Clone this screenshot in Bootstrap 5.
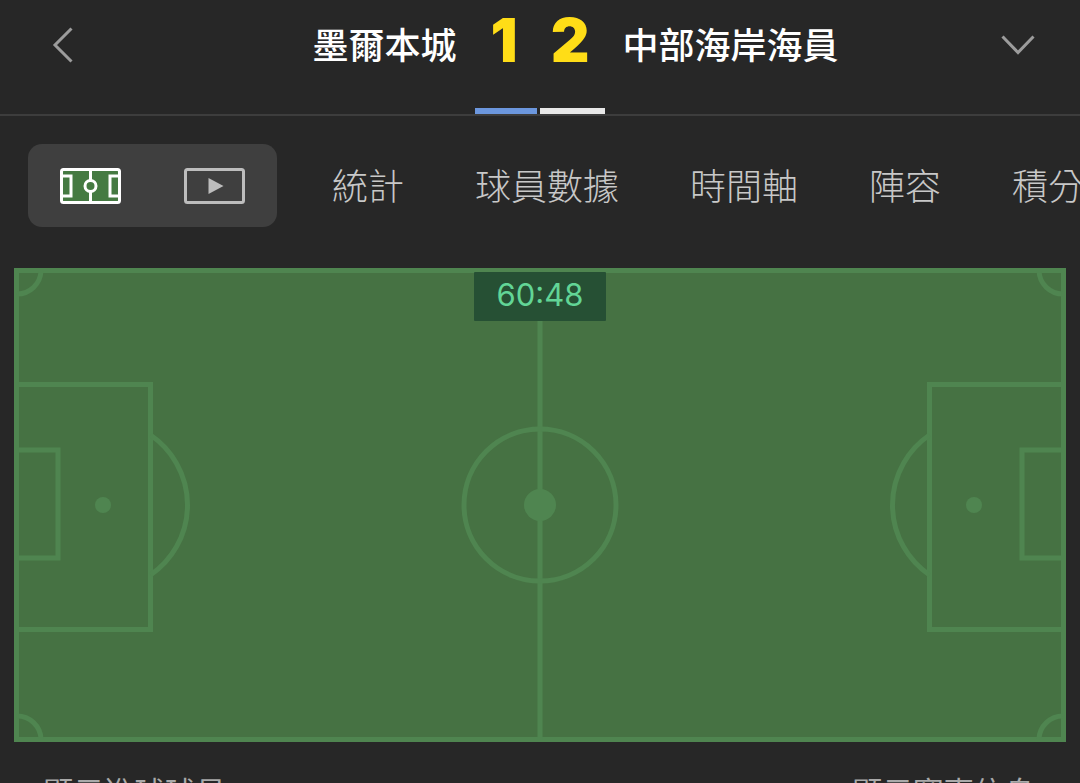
<!DOCTYPE html>
<html lang="zh-Hant">
<head>
<meta charset="utf-8">
<title>墨爾本城 1 2 中部海岸海員</title>
<link href="https://cdn.jsdelivr.net/npm/bootstrap@5.3.0/dist/css/bootstrap.min.css" rel="stylesheet">
<style>
html,body{height:783px;overflow:hidden}
body{background:#272727;font-family:"Noto Sans CJK TC","Liberation Sans",sans-serif;color:#c8c8c8}
.match-head{height:108px;display:grid;grid-template-columns:1fr auto 1fr;align-items:flex-start}
.side-l,.side-r{display:flex;align-items:center;height:90px;justify-content:space-between}
.side-l{padding-left:52px;padding-right:34px}
.side-r{padding-left:33px;padding-right:45px}
.team-name{font-size:36px;font-weight:500;color:#fff;line-height:1;white-space:nowrap;margin-top:-5px}
.scores{display:flex;gap:33px;height:80px;align-items:center;font-family:Inter,"Liberation Sans",sans-serif;font-weight:900;font-size:60px;line-height:1;color:#ffdd17}
.score-bars{height:6px;gap:3px}
.bar-home{width:62px;background:#6c97de}
.bar-away{width:65px;background:#e8e8e8}
.head-rule{height:2px;background:#3d3d3d}
.tab-row{padding:28px 0 0 28px;gap:55px;white-space:nowrap;height:152px}
.view-pill{width:249px;height:83px;background:#3f3f3f;border-radius:14px;padding-left:32px;gap:63px;flex:none}
.tab-list{gap:71px;font-size:36px;font-weight:300;line-height:80px;height:83px}
.pitch-wrap{margin:0 14px;height:474px}
.pitch-wrap svg{display:block}
.clock{top:4px;left:460px;width:132px;height:49px;background:#265034;color:#62d596;font-family:Inter,"Liberation Sans",sans-serif;font-size:31px;line-height:45px;text-align:center;border-radius:1px}
.foot-row{padding:29px 45px 0 43px;font-size:30.5px;line-height:40px;color:#aaa}
</style>
</head>
<body>
<div class="match-head">
  <div class="side-l">
    <svg width="22" height="36" viewBox="0 0 22 36" fill="none" stroke="#9c9c9c" stroke-width="3"><path d="M19.5 1.5 3 18l16.5 16.5"/></svg>
    <span class="team-name">墨爾本城</span>
  </div>
  <div class="scores"><span>1</span><span>2</span></div>
  <div class="side-r">
    <span class="team-name">中部海岸海員</span>
    <svg width="34" height="20" viewBox="0 0 34 20" fill="none" stroke="#9c9c9c" stroke-width="3"><path d="M1.5 1.5 17 17.5 32.5 1.5"/></svg>
  </div>
</div>
<div class="score-bars d-flex justify-content-center">
  <div class="bar-home"></div><div class="bar-away"></div>
</div>
<div class="head-rule"></div>
<div class="tab-row d-flex">
  <div class="view-pill d-flex align-items-center">
    <svg width="61" height="36" viewBox="0 0 61 36"><rect x="1.5" y="1.5" width="58" height="33" rx="2" fill="#457a42" stroke="#fff" stroke-width="3"/><g fill="none" stroke="#fff" stroke-width="3"><path d="M30.5 2v32"/><circle cx="30.5" cy="18" r="5.5" fill="#457a42"/><path d="M2 8h9v20H2M59 8h-9v20h9"/></g></svg>
    <svg width="61" height="36" viewBox="0 0 61 36"><rect x="1.5" y="1.5" width="58" height="33" rx="2" fill="none" stroke="#bdbdbd" stroke-width="3"/><path d="M24.5 10v16l15-8z" fill="#bdbdbd"/></svg>
  </div>
  <div class="tab-list d-flex">
    <span>統計</span><span>球員數據</span><span>時間軸</span><span>陣容</span><span>積分</span>
  </div>
</div>
<div class="pitch-wrap position-relative">
  <svg width="1052" height="474" viewBox="0 0 1052 474">
    <rect width="1052" height="474" fill="#467243"/>
    <g fill="none" stroke="#4f8550" stroke-width="5">
      <rect x="2.5" y="2.5" width="1047" height="469"/>
      <path d="M526 2v470"/>
      <circle cx="526" cy="237" r="76"/>
      <path d="M3 116.5h133.5v245H3M3 182h41v108H3"/>
      <path d="M1049 116.5H915.5v245H1049M1049 182h-41v108h41"/>
      <path d="M136.5 167A84.7 84.7 0 0 1 136.5 307M915.5 167A84.7 84.7 0 0 0 915.5 307"/>
      <path d="M3 26A24 24 0 0 0 27 3M1049 26A24 24 0 0 1 1025 3M3 448A24 24 0 0 1 27 471M1049 448A24 24 0 0 0 1025 471"/>
    </g>
    <g fill="#4f8550">
      <circle cx="526" cy="237" r="16"/>
      <circle cx="89" cy="237" r="8"/>
      <circle cx="960" cy="237" r="8"/>
    </g>
  </svg>
  <div class="clock position-absolute">60:48</div>
</div>
<div class="foot-row d-flex justify-content-between">
  <span>顯示進球球員</span><span>顯示賽事信息</span>
</div>
<script src="https://cdn.jsdelivr.net/npm/bootstrap@5.3.0/dist/js/bootstrap.bundle.min.js"></script>
</body>
</html>
